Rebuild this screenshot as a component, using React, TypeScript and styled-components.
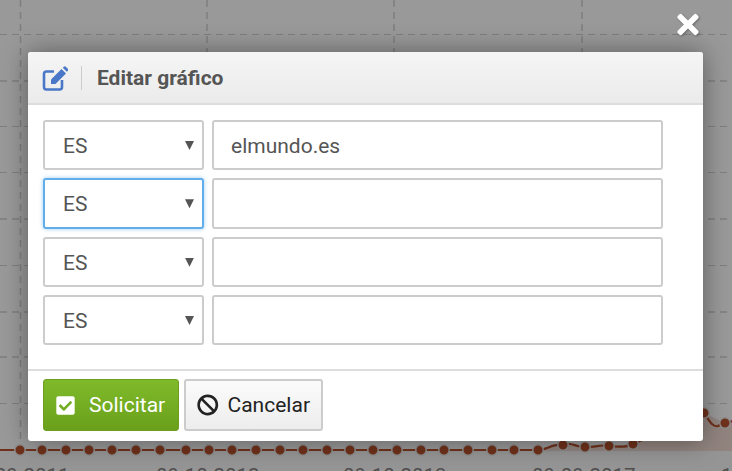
import React from "react";
import styled, { createGlobalStyle } from "styled-components";
import { FaBan, FaCheckSquare, FaTimes } from "react-icons/fa";

const Global = createGlobalStyle`
  html, body { margin: 0; padding: 0; background: #999; }
  * { box-sizing: border-box; }
`;

const Page = styled.div`
  position: relative;
  width: 732px;
  height: 471px;
  overflow: hidden;
  background: #999;
  font-family: Roboto, "Liberation Sans", sans-serif;
`;

const ChartSvg = styled.svg`
  position: absolute;
  inset: 0;
`;

const AxisLabel = styled.text`
  font-family: Roboto, "Liberation Sans", sans-serif;
  font-size: 20.5px;
  fill: #4f4f4f;
`;

const Overlay = styled.div`
  position: absolute;
  inset: 0;
  padding: 52px 0 0 28px;
`;

const CloseButton = styled.button`
  position: absolute;
  left: 674px;
  top: 10px;
  width: 28px;
  height: 28px;
  padding: 0;
  border: 0;
  background: none;
  color: #fff;
  display: flex;
  align-items: center;
  justify-content: center;
  filter: drop-shadow(1px 1px 1px rgba(0, 0, 0, 0.3));
`;

const Modal = styled.div`
  width: 675px;
  height: 389px;
  display: flex;
  flex-direction: column;
  background: #fff;
  border-radius: 3px;
  box-shadow: 0 0 26px rgba(0, 0, 0, 0.4);
`;

const Header = styled.header`
  height: 53px;
  flex: none;
  display: flex;
  align-items: center;
  padding: 0 0 0 14px;
  background: linear-gradient(#f5f5f5, #ebebeb);
  border-bottom: 2px solid #ddd;
  border-radius: 3px 3px 0 0;
`;

const Separator = styled.span`
  width: 1px;
  height: 24px;
  margin: 0 15px 0 13px;
  background: #ccc;
`;

const Title = styled.h2`
  margin: 0;
  font-size: 21px;
  font-weight: 700;
  color: #555;
`;

const Body = styled.div`
  height: 264px;
  flex: none;
  display: grid;
  grid-auto-rows: 50.33px;
  row-gap: 8px;
  padding: 15px 40px 0 15px;
`;

const Row = styled.div`
  display: grid;
  grid-template-columns: 161px 451px;
  column-gap: 8px;
`;

const SelectWrap = styled.div`
  position: relative;
  &::after {
    content: "";
    position: absolute;
    right: 10px;
    top: 21px;
    width: 9px;
    height: 9px;
    background: #555;
    clip-path: polygon(0 0, 100% 0, 50% 100%);
  }
`;

const Select = styled.select<{ $focused?: boolean }>`
  appearance: none;
  width: 100%;
  height: 100%;
  padding: 2px 0 0 18px;
  background: #fff;
  border: 2px solid ${(p) => (p.$focused ? "#62aeea" : "#ccc")};
  border-radius: 3px;
  box-shadow: ${(p) => (p.$focused ? "0 0 4px rgba(98, 174, 234, 0.6)" : "none")};
  font: 400 21px Roboto, "Liberation Sans", sans-serif;
  color: #555;
  outline: none;
`;

const Input = styled.input`
  width: 100%;
  height: 100%;
  padding: 2px 17px 0;
  background: #fff;
  border: 2px solid #ccc;
  border-radius: 3px;
  font: 400 21px Roboto, "Liberation Sans", sans-serif;
  color: #555;
  outline: none;
`;

const Footer = styled.footer`
  flex: 1;
  display: flex;
  align-items: flex-start;
  gap: 5px;
  padding: 8px 0 0 15px;
  border-top: 2px solid #ddd;
`;

const Button = styled.button<{ $primary?: boolean }>`
  height: 52px;
  display: flex;
  align-items: center;
  gap: ${(p) => (p.$primary ? "13px" : "9px")};
  padding: 0 11px;
  width: ${(p) => (p.$primary ? "136px" : "139px")};
  border: ${(p) => (p.$primary ? "1px solid #6c9f20" : "2px solid #ccc")};
  border-radius: 3px;
  background: ${(p) =>
    p.$primary ? "linear-gradient(#7fba2a, #6aa01b)" : "linear-gradient(#fbfbfb, #ededed)"};
  color: ${(p) => (p.$primary ? "#fff" : "#222")};
  font: 400 21px Roboto, "Liberation Sans", sans-serif;
  white-space: nowrap;
`;

const EditIcon = () => (
  <svg width="26" height="26" viewBox="0 0 26 26" fill="none">
    <path
      d="M12 6.5H4.5A2.5 2.5 0 0 0 2 9v13a2.5 2.5 0 0 0 2.5 2.5h13A2.5 2.5 0 0 0 20 22v-7"
      stroke="#4a77c8"
      strokeWidth="2.6"
    />
    <path d="M9 14.5 19.5 4l4.5 4.5L13.5 19H9z" fill="#4a77c8" />
    <path d="M20.8 2.7l1-1a1.4 1.4 0 0 1 2 0l2 2a1.4 1.4 0 0 1 0 2l-1 1z" fill="#4a77c8" />
  </svg>
);

const hLines = [34.5, 81, 126.5, 172.5, 219, 265.5, 312, 357, 403.5];
const vLines = [20.5, 207, 394, 582];
const flatXs = [20, 42, 66, 89, 112, 136, 160, 186, 209, 232, 256, 280, 303, 327, 350, 373, 397, 421, 444, 468, 492, 514, 538];
const risePts: [number, number][] = [[563, 445], [585, 447], [609, 446], [633, 444], [704, 413], [725, 423]];
const dots: [number, number][] = [...flatXs.map((x): [number, number] => [x, 450]), ...risePts];
const linePath =
  "M-4 450H538C546 450 554 443 563 445C571 441 577 448 585 447C593 448 600 444 609 446C617 447 626 448 633 444L704 413C708 418 712 428 718 426C720 425 722 423 725 423L745 418";
const labels: [number, string][] = [[-34, "09-09-2011"], [156, "09-10-2012"], [343, "09-10-2013"], [532, "09-09-2017"], [721, "1"]];

const Chart = () => (
  <ChartSvg width="732" height="471" viewBox="0 0 732 471">
    <rect x="0" y="451" width="732" height="20" fill="#959595" />
    {hLines.map((y) => (
      <line key={y} x1="0" x2="732" y1={y} y2={y} stroke="#7f7f7f" strokeWidth={y % 1 ? 1 : 1.6} strokeDasharray="7 5" />
    ))}
    {vLines.map((x) => (
      <line key={x} x1={x} x2={x} y1="0" y2="451" stroke="#7f7f7f" strokeWidth="1.5" strokeDasharray="7 5" />
    ))}
    <polygon points="538,451 538,450 563,445 585,447 609,446 633,444 704,413 725,423 732,421 732,451" fill="rgba(125,70,50,0.25)" />
    <path d={linePath} fill="none" stroke="#6f311b" strokeWidth="2.2" />
    {dots.map(([x, y]) => (
      <circle key={x} cx={x} cy={y} r="5.25" fill="#6f311b" stroke="#8e8e8e" strokeWidth="1.5" />
    ))}
    {labels.map(([x, t]) => (
      <AxisLabel key={x} x={x} y="483">{t}</AxisLabel>
    ))}
  </ChartSvg>
);

const rows = [
  { value: "elmundo.es" },
  { value: "", focused: true },
  { value: "" },
  { value: "" },
];

export default function App() {
  return (
    <Page>
      <Global />
      <Chart />
      <Overlay>
        <CloseButton aria-label="Cerrar">
          <FaTimes size={31} />
        </CloseButton>
        <Modal>
          <Header>
            <EditIcon />
            <Separator />
            <Title>Editar gráfico</Title>
          </Header>
          <Body>
            {rows.map((row, i) => (
              <Row key={i}>
                <SelectWrap>
                  <Select $focused={row.focused} defaultValue="ES">
                    <option value="ES">ES</option>
                  </Select>
                </SelectWrap>
                <Input defaultValue={row.value} />
              </Row>
            ))}
          </Body>
          <Footer>
            <Button $primary>
              <FaCheckSquare size={21} />
              Solicitar
            </Button>
            <Button>
              <FaBan size={22} />
              Cancelar
            </Button>
          </Footer>
        </Modal>
      </Overlay>
    </Page>
  );
}
